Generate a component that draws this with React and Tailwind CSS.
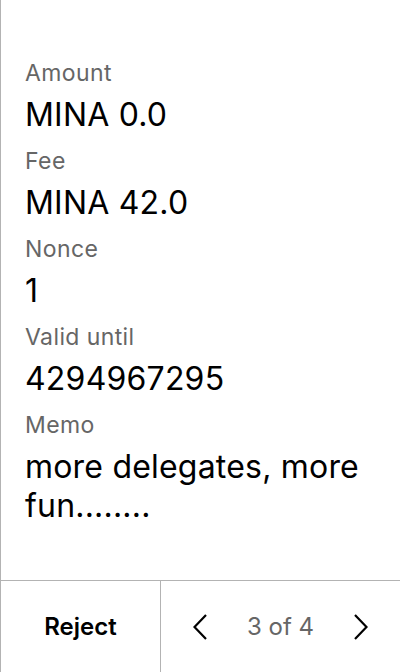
import React from 'react';

const fields = [
  { label: 'Amount', value: 'MINA 0.0' },
  { label: 'Fee', value: 'MINA 42.0' },
  { label: 'Nonce', value: '1' },
  { label: 'Valid until', value: '4294967295' },
  { label: 'Memo', value: 'more delegates, more fun........' },
];

const Chevron = ({ dir }) => (
  <svg width="14" height="26" viewBox="0 0 14 26" fill="none" stroke="black" strokeWidth="2.2">
    {dir === 'left' ? <polyline points="13,1 1.5,13 13,25" /> : <polyline points="1,1 12.5,13 1,25" />}
  </svg>
);

const App = () => {
  return (
    <div className="h-[672px] w-[400px] flex flex-col bg-white border-l border-[#b3b3b3] font-['Inter',sans-serif]">
      <div className="flex-grow flex flex-col pl-6 pr-4 pt-[59px]">
        {fields.map((f) => (
          <div key={f.label} className="flex flex-col mb-[13px]">
            <span className="text-[23px] leading-[28px] tracking-[0.4px] text-[#666666]">{f.label}</span>
            <span className="text-[32px] leading-[39px] tracking-[0.2px] text-black mt-[8px]">{f.value}</span>
          </div>
        ))}
      </div>
      <div className="h-[92px] flex border-t border-[#b3b3b3]">
        <button className="w-[160px] flex items-center justify-center text-[24px] font-semibold text-black border-r border-[#b3b3b3]">
          Reject
        </button>
        <div className="flex-grow flex items-center justify-between pl-[32px] pr-[32px]">
          <Chevron dir="left" />
          <span className="text-[24px] text-[#666666]">3 of 4</span>
          <Chevron dir="right" />
        </div>
      </div>
    </div>
  );
};

export default App;
